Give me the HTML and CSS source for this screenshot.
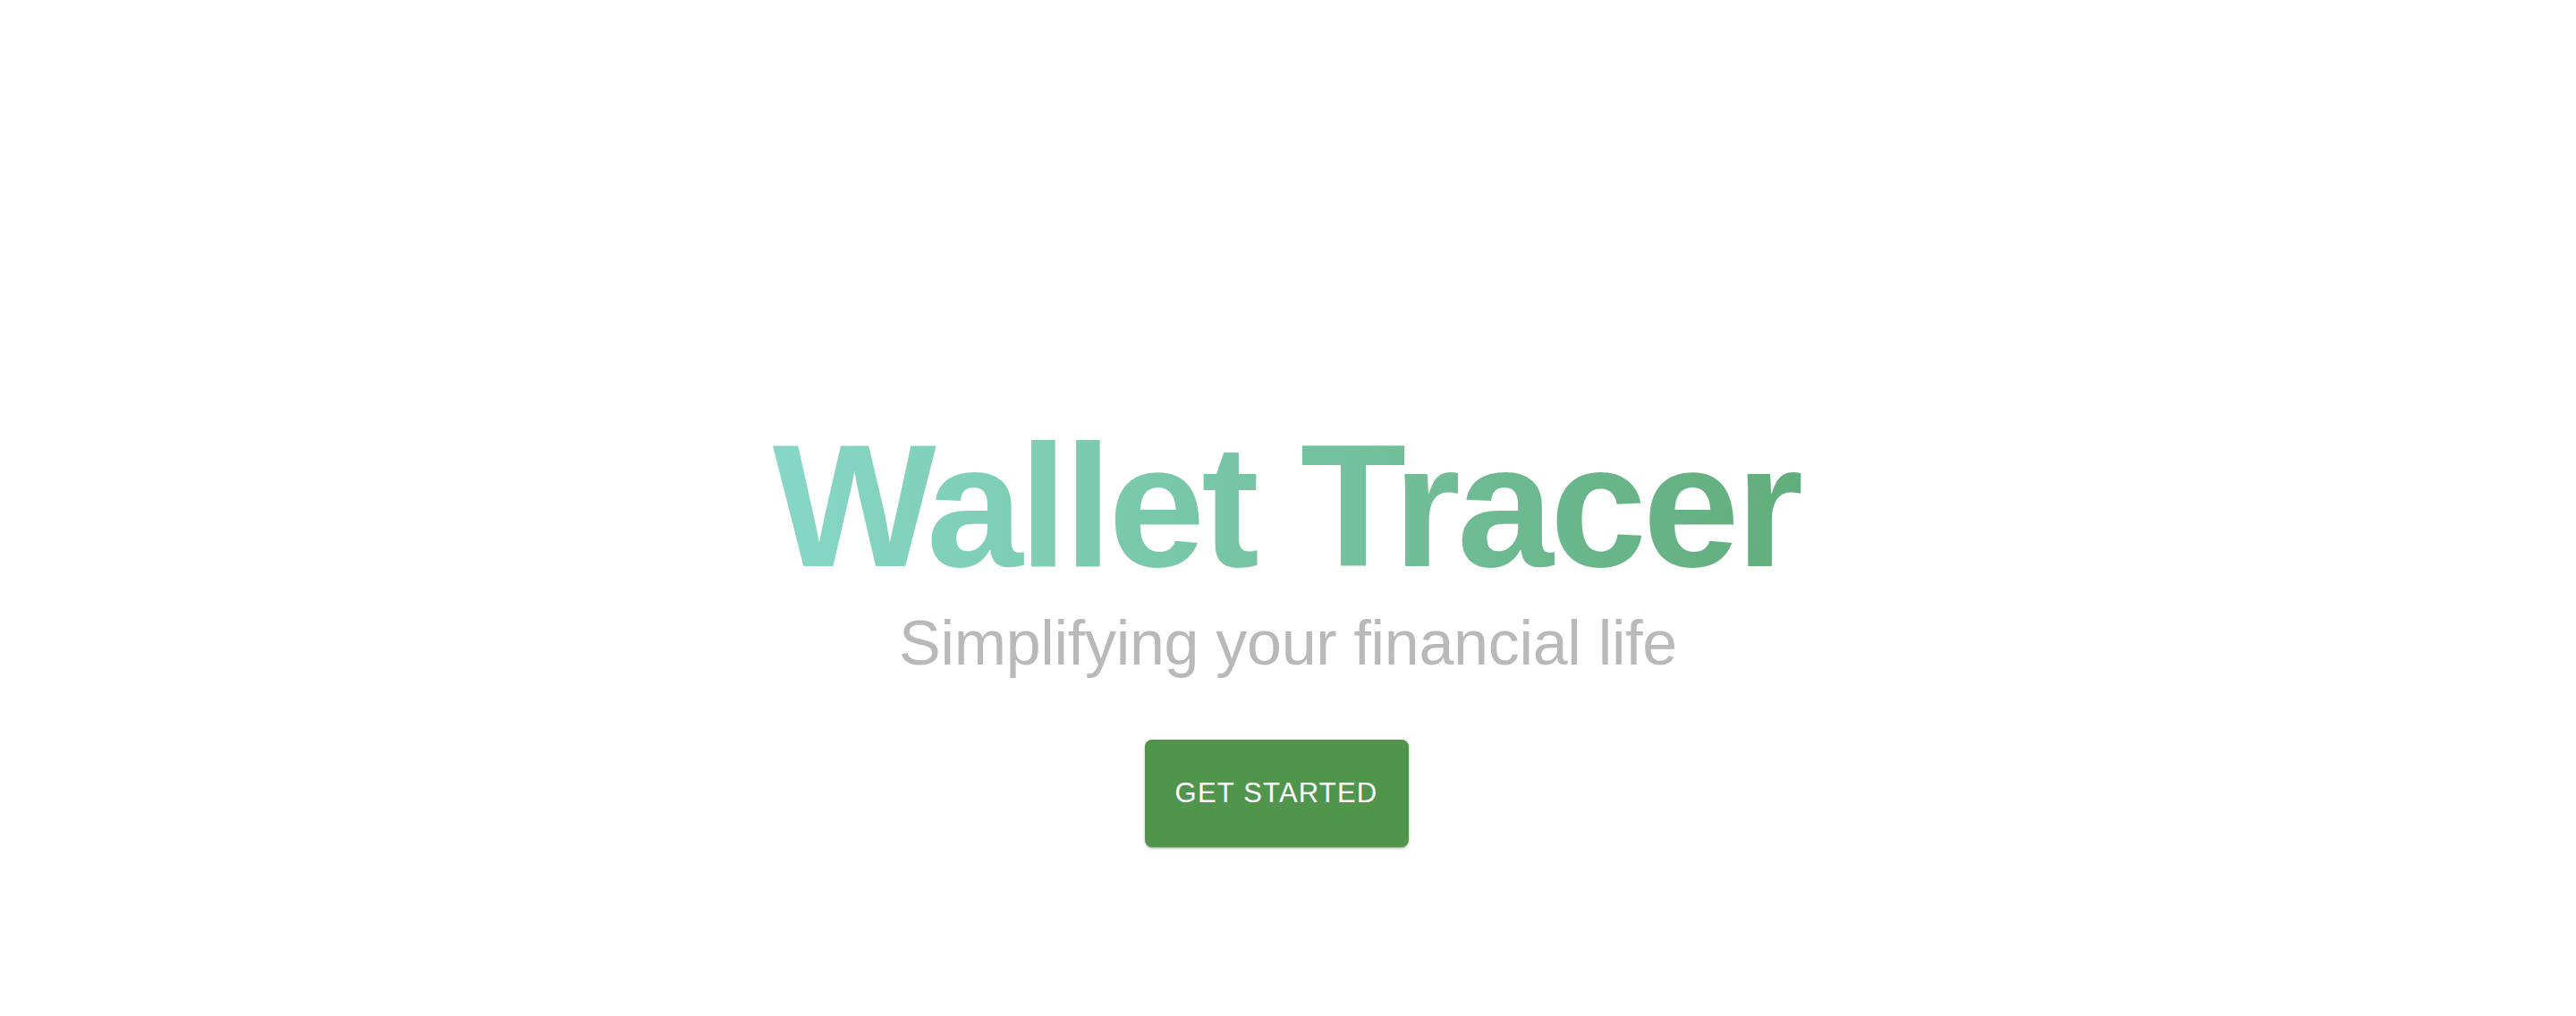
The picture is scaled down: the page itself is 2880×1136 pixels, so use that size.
FILE: index.html
```html
<!DOCTYPE html>
<html lang="en">
<head>
<meta charset="utf-8">
<title>Wallet Tracer</title>
<link rel="stylesheet" href="styles.css">
</head>
<body>
<main class="hero">
  <h1 class="title">Wallet Tracer</h1>
  <p class="subtitle">Simplifying your financial life</p>
  <button class="cta">GET STARTED</button>
</main>
</body>
</html>
```

FILE: styles.css
```css
html, body {
  margin: 0;
  padding: 0;
  background: #ffffff;
}
body {
  width: 2880px;
  height: 1136px;
  overflow: hidden;
  font-family: "Liberation Sans", Arial, sans-serif;
}
.hero {
  display: flex;
  flex-direction: column;
  align-items: center;
  padding-top: 469px;
}
.title {
  margin: 0;
  font-size: 194px;
  line-height: 1;
  font-weight: 700;
  letter-spacing: -4px;
  background: linear-gradient(90deg, #86d7c6 0%, #75c3a2 50%, #62ad7b 100%);
  -webkit-background-clip: text;
  background-clip: text;
  color: transparent;
  -webkit-text-fill-color: transparent;
  padding-right: 4px;
}
.subtitle {
  margin: 21px 0 0;
  font-size: 70px;
  line-height: 1;
  font-weight: 400;
  color: #b9b9b9;
  letter-spacing: -0.3px;
}
.cta {
  margin-top: 73px;
  margin-right: 26px;
  width: 295px;
  height: 120px;
  border: none;
  border-radius: 8px;
  background: #4f954c;
  color: #ffffff;
  font-family: "Liberation Sans", Arial, sans-serif;
  font-size: 31px;
  letter-spacing: 1.2px;
  box-shadow: 0 3px 1px -2px rgba(0,0,0,0.2), 0 2px 2px 0 rgba(0,0,0,0.14), 0 1px 5px 0 rgba(0,0,0,0.12);
  cursor: pointer;
}
```
